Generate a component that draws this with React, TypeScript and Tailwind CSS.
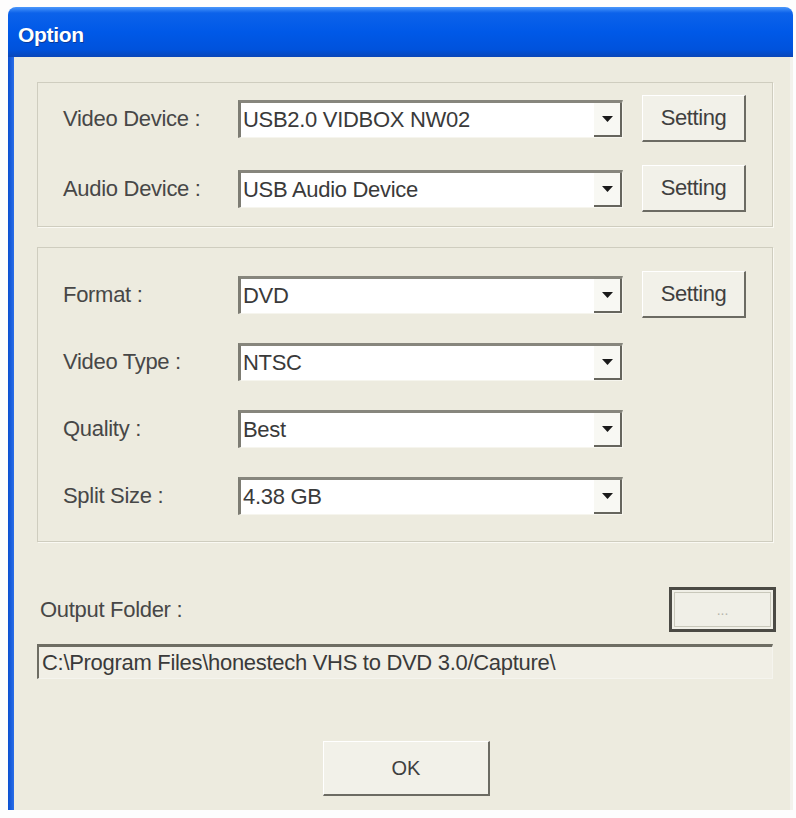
import React from "react";

const font = { fontFamily: '"Liberation Sans", Arial, sans-serif' };

function Arrow() {
  return (
    <svg width="11" height="6" viewBox="0 0 11 6" className="block">
      <polygon points="0,0 11,0 5.5,6" fill="#1a1a1a" />
    </svg>
  );
}

function Combo({ value }: { value: string }) {
  return (
    <div className="flex h-[38px] w-[385px] border-l-[3px] border-t-[3px] border-r border-b border-l-[#7d7c73] border-t-[#87867d] border-r-[#f6f5ee] border-b-[#f6f5ee] bg-white">
      <div className="flex flex-1 items-center pl-[2px] text-[22px] leading-none text-[#3a3a3a] tracking-[-0.3px]">
        {value}
      </div>
      <div className="flex w-[28px] items-center justify-center border-r-2 border-b-2 border-r-[#66655d] border-b-[#66655d] bg-[#f8f8f3]">
        <Arrow />
      </div>
    </div>
  );
}

function RaisedButton({
  label,
  className,
}: {
  label: string;
  className: string;
}) {
  return (
    <div
      className={`flex items-center justify-center border-l border-t border-r-2 border-b-2 border-l-white border-t-white border-r-[#6c6b63] border-b-[#6c6b63] bg-[#f2f1e9] text-[#3f3f3f] leading-none ${className}`}
    >
      {label}
    </div>
  );
}

function Row({
  label,
  value,
  setting,
}: {
  label: string;
  value: string;
  setting?: boolean;
}) {
  return (
    <div className="flex h-[47px] items-center">
      <div className="w-[175px] text-[22px] leading-none text-[#474747] tracking-[-0.3px]">
        {label}
      </div>
      <Combo value={value} />
      {setting && (
        <RaisedButton
          label="Setting"
          className="ml-[19px] h-[47px] w-[104px] text-[22px] tracking-[-0.4px]"
        />
      )}
    </div>
  );
}

export default function App() {
  return (
    <div className="h-[818px] w-[796px] overflow-hidden bg-[#fdfdfd]" style={font}>
      <div className="ml-[8px] mt-[7px] w-[785px]">
        {/* Title bar */}
        <div className="flex h-[50px] items-center rounded-t-[8px] bg-[linear-gradient(180deg,#4a97fb_0%,#0c62ea_12%,#0059e8_50%,#0052dc_85%,#0a46b8_100%)] pl-[10px] pt-[4px]">
          <span className="text-[21px] font-bold leading-none tracking-[-0.3px] text-white [text-shadow:1px_1px_0_#0a3a9a]">
            Option
          </span>
        </div>

        {/* Body */}
        <div className="flex h-[753px]">
          <div className="w-[6px] bg-[linear-gradient(90deg,#0a4fd0,#2a6ee8)]" />
          <div className="flex-1 border-r-[3px] border-r-[#f3f2ec] bg-[#edebdf] pl-[23px] pr-[17px] pt-[25px]">
            {/* Devices group */}
            <div className="border border-[#cfcdbf] pl-[25px] pt-[12px] pb-[14px] shadow-[1px_1px_0_#faf9f3]">
              <div className="flex flex-col gap-[23px]">
                <Row label="Video Device :" value="USB2.0 VIDBOX NW02" setting />
                <Row label="Audio Device :" value="USB Audio Device" setting />
              </div>
            </div>

            {/* Format group */}
            <div className="mt-[20px] border border-[#cfcdbf] pl-[25px] pt-[23px] pb-[22px] shadow-[1px_1px_0_#faf9f3]">
              <div className="flex flex-col gap-[20px]">
                <Row label="Format :" value="DVD" setting />
                <Row label="Video Type :" value="NTSC" />
                <Row label="Quality :" value="Best" />
                <Row label="Split Size :" value="4.38 GB" />
              </div>
            </div>

            {/* Output folder */}
            <div className="mt-[45px] mr-[-3px] flex h-[45px] items-center justify-between pl-[3px]">
              <span className="text-[22px] leading-none text-[#474747] tracking-[-0.3px]">
                Output Folder :
              </span>
              <div className="flex h-[45px] w-[107px] border-[3px] border-[#4b4a44] bg-[#f0efe7] p-[2px]">
                <div className="flex flex-1 items-center justify-center border border-[#c9c8bb] text-[14px] leading-none text-[#b5b4aa]">
                  ...
                </div>
              </div>
            </div>

            <div className="mt-[12px] flex h-[35px] items-center border-l-2 border-t-[3px] border-l-[#6e6d63] border-t-[#6e6d63] border-r border-b border-r-[#f5f4ee] border-b-[#f5f4ee] bg-[#f1efe6] pl-[3px] text-[22px] leading-none text-[#3a3a3a] tracking-[-0.3px]">
              C:\Program Files\honestech VHS to DVD 3.0/Capture\
            </div>

            {/* OK */}
            <div className="mt-[62px] flex pl-[286px]">
              <RaisedButton label="OK" className="h-[55px] w-[167px] text-[20px]" />
            </div>
          </div>
        </div>
      </div>
    </div>
  );
}
